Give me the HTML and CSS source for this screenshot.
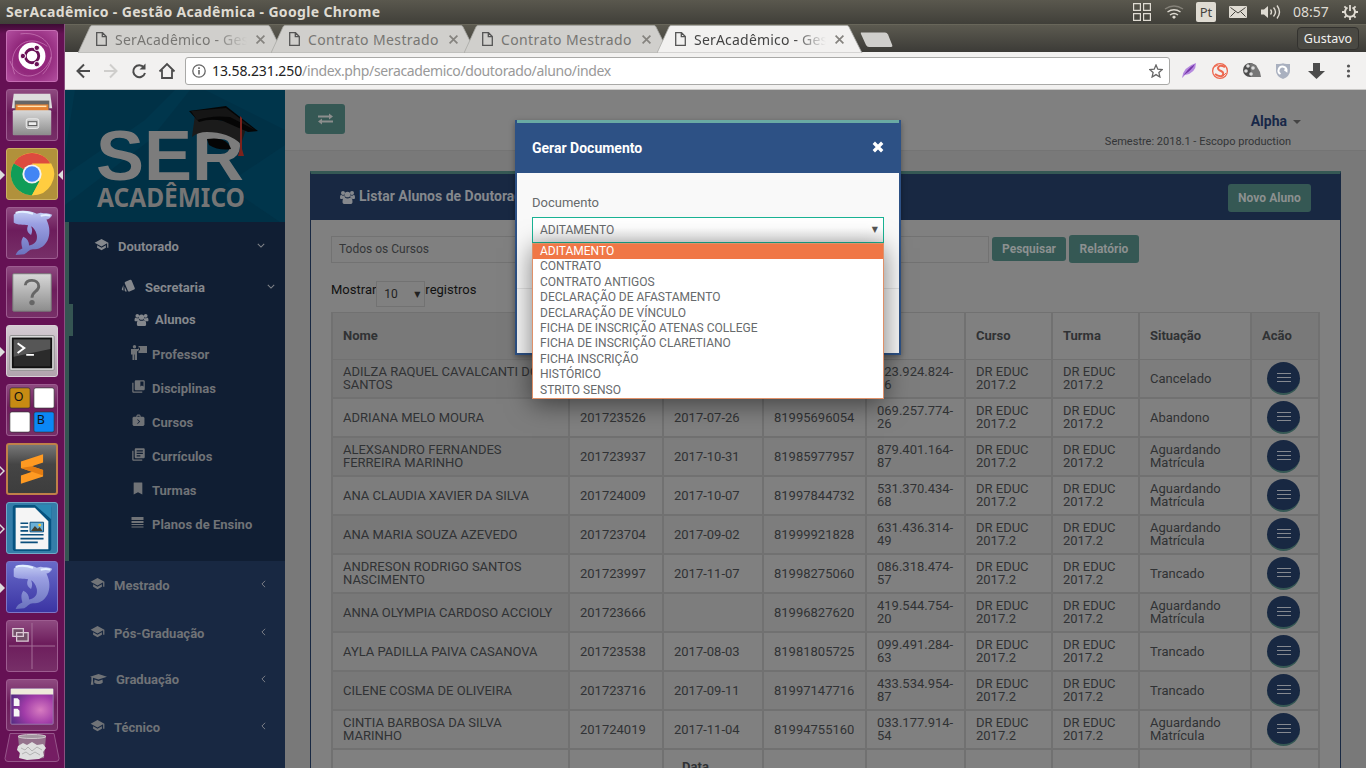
FILE: index.html
```html
<!DOCTYPE html>
<html lang="pt">
<head>
<meta charset="utf-8">
<title>SerAcadêmico - Gestão Acadêmica</title>
<link rel="stylesheet" href="styles.css">
</head>
<body>
<svg class="defs" width="0" height="0">
  <defs>
    <linearGradient id="steel" x1="0" y1="0" x2="0" y2="1"><stop offset="0" stop-color="#d8d8d8"/><stop offset="1" stop-color="#8c8c8c"/></linearGradient>
    <linearGradient id="dol" x1="0" y1="0" x2="0" y2="1"><stop offset="0" stop-color="#c3cdf3"/><stop offset=".3" stop-color="#9a9fe2"/><stop offset="1" stop-color="#6a72bd"/></linearGradient>
    <radialGradient id="desk" cx=".7" cy=".6" r=".8"><stop offset="0" stop-color="#d77bc0"/><stop offset=".5" stop-color="#a13ca8"/><stop offset="1" stop-color="#502a80"/></radialGradient>
  </defs>
  <symbol id="school" viewBox="0 0 24 24"><path d="M12 3L1 9l11 6 9-4.91V17h2V9L12 3zM5 13.18v4L12 21l7-3.82v-4L12 17l-7-3.82z"/></symbol>
  <symbol id="style" viewBox="0 0 24 24"><path d="M2.53 19.65l1.34.56v-9.03l-2.43 5.86c-.41 1.02.08 2.19 1.09 2.61zm19.5-3.7L17.07 3.98a2.013 2.013 0 0 0-1.81-1.23c-.26 0-.53.04-.79.15L7.1 5.95a1.999 1.999 0 0 0-1.08 2.6l4.96 11.97a1.998 1.998 0 0 0 2.6 1.08l7.36-3.05a1.994 1.994 0 0 0 1.09-2.6zM5.88 19.75c0 1.1.9 2 2 2h1.45l-3.45-8.34v6.34z"/></symbol>
  <symbol id="users" viewBox="0 0 30 28"><circle cx="6" cy="6" r="4"/><circle cx="24" cy="6" r="4"/><circle cx="15" cy="9" r="5.7"/><path d="M0 16c0-5 1-6 3-6 2 2 4 2 6 0 0 3 1 5 2 6-3 0-5 0-6 2H3c-2 0-3-1-3-2zM30 16c0-5-1-6-3-6-2 2-4 2-6 0 0 3-1 5-2 6 3 0 5 0 6 2h2c2 0 3-1 3-2zM5 24c0-5 1-9 5-9 3 2.500 7 2.500 10 0 4 0 5 4 5 9 0 3-2 4-4 4H9c-2 0-4-1-4-4z"/></symbol>
  <symbol id="teacher" viewBox="0 0 16 15"><circle cx="3.500" cy="1.700" r="1.700"/><path d="M0 4h7l1-1v2L6 6.500V15H4V9.500H3.400V15H1.500V9.500H0zM7.500 1H16v7H7.500V6L9 5V2.500H7.500z"/></symbol>
  <symbol id="shelf" viewBox="0 0 24 24"><path d="M4 6H2v14c0 1.100.9 2 2 2h14v-2H4V6zm16-4H8c-1.100 0-2 .9-2 2v12c0 1.100.9 2 2 2h12c1.100 0 2-.9 2-2V4c0-1.100-.9-2-2-2zm0 10l-2.500-1.500L15 12V4h5v8z"/></symbol>
  <symbol id="case" viewBox="0 0 24 24"><path fill-rule="evenodd" d="M8 5V3l2-2h4l2 2v2h5l2 2v13l-2 2H3l-2-2V7l2-2zm2 0h4V3h-4zm0 4v2l3 3-3 3v2l5-5z"/></symbol>
  <symbol id="books" viewBox="0 0 24 24"><path d="M4 6H2v14c0 1.100.9 2 2 2h14v-2H4V6zm16-4H8c-1.100 0-2 .9-2 2v12c0 1.100.9 2 2 2h12c1.100 0 2-.9 2-2V4c0-1.100-.9-2-2-2zm-1 9H9V9h10v2zm-4 4H9v-2h6v2zm4-8H9V5h10v2z"/></symbol>
  <symbol id="mark" viewBox="0 0 24 24"><path d="M19 1H5c-1 0-1 1-1 2v20l8-4 8 4V3c0-1 0-2-1-2z"/></symbol>
  <symbol id="lines" viewBox="0 0 12 11"><path d="M0 0h12v3H0zM0 4h12v2H0zM0 7h12v1H0zM0 9.500h12v1H0z"/></symbol>
  <symbol id="cap" viewBox="0 0 17 12"><path d="M8.500 0L17 2.700 8.500 5.500 3 3.700v3l.5 4H.8l.6-4V3.200L0 2.700zM4.500 5.500l4 1.400 4-1.400.3 3c-2 2-6.600 2-8.600 0z"/></symbol>
  <symbol id="down" viewBox="0 0 10 6"><path d="M1 1l4 4 4-4" fill="none" stroke="currentColor" stroke-width="1.300"/></symbol>
  <symbol id="left" viewBox="0 0 6 10"><path d="M5 1L1 5l4 4" fill="none" stroke="currentColor" stroke-width="1.200"/></symbol>
  <symbol id="tab" viewBox="0 0 206 28"><path d="M0 28L12 2Q12.500 .5 14 .5H190Q191.500 .5 192 2L205 28z" stroke="#aaa9a6" stroke-width=".8"/></symbol>
  <symbol id="page" viewBox="0 0 11 14"><path d="M.7.700h5.800l3.800 3.800v8.800H.7zM6.300.700v4h4" fill="none" stroke="#555" stroke-width="1.300"/></symbol>
  <symbol id="x" viewBox="0 0 8 8"><path d="M.5.500l7 7M7.500.500l-7 7" stroke="currentColor" stroke-width="1.500"/></symbol>
  <symbol id="dolphin" viewBox="0 0 52 52"><path d="M7 7C12 1 23 2 31 6l4-1c4 1 8 0 12 2-1 3-4 5-6 5 4 8 4 16 1 22-4 7-9 9-15 9-4 0-6 4-9 5l-9 1c1-4 4-6 7-7-1-4-2-8 1-12 4 2 6 5 6 9 6-1 9-5 8-11-1-5-4-8-6-9 2 4 1 7 0 9-4-2-5-6-3-10-5-1-11 0-15-3z" fill="url(#dol)"/><path d="M9 5c6-2 12-1 18 1M35 8c4-1 7-1 10 0" stroke="#e2efff" stroke-width="2" fill="none"/></symbol>
</svg>

<header class="topbar">
  <span class="wtitle">SerAcadêmico - Gestão Acadêmica - Google Chrome</span>
  <div class="tray">
    <svg width="18" height="18" viewBox="0 0 18 18" fill="none" stroke="#dfdbd2" stroke-width="1.200"><path d="M.6.600h6.800v6.800H.6zM10.600.600h6.800v6.800h-6.800zM.6 10.600h6.800v6.800H.6zM10.600 10.600h6.800v6.800h-6.800z"/></svg>
    <svg class="wifi" width="20" height="14" viewBox="0 0 20 14" fill="none" stroke="#dfdbd2" stroke-width="1.500"><path d="M1 4q9-6 18 0" stroke="#858279"/><path d="M3.500 7q6.500-4.500 13 0M6 10q4-3 8 0"/><path d="M8 12l2-1.500 2 1.500-2 2z" fill="#dfdbd2" stroke="none"/></svg>
    <span class="lang">Pt</span>
    <svg class="mail" width="18" height="12" viewBox="0 0 18 12"><rect width="18" height="12" rx="1" fill="#dfdbd2"/><path d="M1.500 1.500L9 7l7.500-5.500M1.500 10.500l5-5M16.500 10.500l-5-5" stroke="#45433d" fill="none"/></svg>
    <svg class="vol" width="20" height="14" viewBox="0 0 20 14"><path d="M0 4.500h3L7 1v12L3 9.500H0z" fill="#dfdbd2"/><path d="M9.500 4.500q2 2.500 0 5M12.500 2.500q4 4.500 0 9M16 .5q5 6.500 0 13" stroke="#dfdbd2" fill="none" stroke-width="1.400"/></svg>
    <span class="clock">08:57</span>
    <svg class="gear" width="16" height="16" viewBox="0 0 16 16" fill="none" stroke="#dfdbd2"><path d="M5.500 3.500a5 5 0 1 0 5 0" stroke-width="2"/><path d="M8 1v6M8 13v3M0 8h3M13 8h3M2.400 2.400l2 2M13.600 2.400l-2 2M2.400 13.600l2-2M13.600 13.600l-2-2" stroke-width="1.800"/></svg>
  </div>
</header>

<div class="desktop">
<nav class="launcher">
  <div class="tile ubuntu"><svg viewBox="0 0 52 52"><path d="M8 45C-2 20 20 0 42 16M14 3c28-4 43 22 23 42M3 31c8 24 36 19 43-4" fill="none" stroke="#d58bc4" opacity=".6"/><circle cx="26" cy="26" r="14" fill="#fff"/><circle cx="26" cy="26" r="7" fill="none" stroke="#6a1156" stroke-width="3"/><g fill="#6a1156" stroke="#fff"><circle cx="16.500" cy="26" r="2.800"/><circle cx="31" cy="17.500" r="2.800"/><circle cx="31" cy="34.500" r="2.800"/></g></svg></div>
  <div class="tile"><svg viewBox="0 0 52 52"><path d="M7 4h38l2 15H5z" fill="#ddd"/><rect x="8" y="11" width="36" height="12" fill="#666"/><rect x="9" y="15" width="34" height="8" fill="#e48232"/><path d="M11 17h30" stroke="#ffe3b4" stroke-width="1.500"/><rect x="6" y="21" width="40" height="26" rx="1" fill="url(#steel)"/><rect x="20" y="30" width="13" height="10" rx="2" fill="#c9c9c9" stroke="#eee"/><rect x="22" y="33" width="9" height="4" fill="#eee" stroke="#555"/></svg></div>
  <div class="tile gold run focus"><svg viewBox="0 0 52 52"><circle cx="26" cy="26" r="22" fill="#ffcd40"/><path d="M26 26L7 15a22 22 0 0 1 38 0z" fill="#dd4b3e"/><path d="M7 15A22 22 0 0 0 26 48l8-14-8-8z" fill="#109d58"/><path d="M26 15h20a22 22 0 0 1-20 33l9-17z" fill="#ffcd40"/><circle cx="26" cy="26" r="10" fill="#f2f2f2"/><circle cx="26" cy="26" r="8" fill="#4285f4"/></svg></div>
  <div class="tile"><svg viewBox="0 0 52 52"><use href="#dolphin"/></svg></div>
  <div class="tile"><svg viewBox="0 0 52 52"><rect x="6" y="7" width="40" height="39" rx="1" fill="url(#steel)" stroke="#777"/><path d="M19 19c0-7 14-7 14 1 0 6-7 5-7 12" fill="none" stroke="#666" stroke-width="3"/><circle cx="26" cy="37" r="2.800" fill="#666"/></svg></div>
  <div class="tile silver run"><svg viewBox="0 0 52 52"><rect x="3" y="10" width="46" height="36" rx="1" fill="#e5e5e5" stroke="#888"/><rect x="6" y="13" width="40" height="30" fill="#2b2b2b" stroke="#111" stroke-width="2"/><path d="M7 14h38v10L7 32z" fill="#565656"/><path d="M11 18l7 5-7 5M20 30h8" fill="none" stroke="#fff" stroke-width="2"/></svg></div>
  <div class="tile"><svg viewBox="0 0 52 52"><g stroke="#333" stroke-width=".7"><rect x="3" y="3" width="21" height="21" rx="2" fill="#c78b13"/><rect x="28" y="3" width="21" height="21" rx="2" fill="#fff"/><rect x="3" y="28" width="21" height="21" rx="2" fill="#fff"/><rect x="28" y="28" width="21" height="21" rx="2" fill="#0b87f5"/></g><text x="7" y="17" class="boxlet">O</text><text x="31" y="41" class="boxlet">B</text></svg></div>
  <div class="tile subl win"><svg viewBox="0 0 52 52"><path d="M14 18l24-8v9l-12 4 12 4v7l-24 8v-9l12-4-12-4z" fill="#ff9a22"/><path d="M14 25l12-2 12 4v6z" fill="#e37c12"/></svg></div>
  <div class="tile writer win"><svg viewBox="0 0 52 52"><rect x="6" y="2" width="40" height="48" rx="3" fill="#065380"/><path d="M9 5h20l14 14v29H9z" fill="#f5f5f5"/><path d="M29 2h17v15z" fill="#2b88b4"/><path d="M14 21h8M14 25h8M14 29h8M14 33h24M14 37h24M14 41h18" stroke="#0b4f7c" stroke-width="1.700"/><path d="M24 20h14v10H24z" fill="#6ab0d6" stroke="#0b4f7c"/><path d="M25 29l4-5 3 3 2-2 3 4z" fill="#46412e"/><circle cx="34" cy="23" r="1.500" fill="#ffc62b"/></svg></div>
  <div class="tile blue run"><svg viewBox="0 0 52 52"><use href="#dolphin"/></svg></div>
  <div class="tile"><svg viewBox="0 0 52 52"><path d="M26 2v48M2 26h48" stroke="#a57199"/><path d="M6 8h11v8H6zM10 12h12v9H10z" fill="#725068" stroke="#dcc9d6" stroke-width="1.300"/></svg></div>
  <div class="tile"><svg viewBox="0 0 52 52"><rect x="4" y="9" width="44" height="37" rx="1" fill="url(#desk)" stroke="#9877aa"/><path d="M4 9h44v6H4z" fill="#eeebdb"/><path d="M7 19h4l2 2v6H7zM7 30h4l2 2v6H7z" fill="#f6f6f6"/></svg></div>
  <div class="trash"><svg width="56" height="30" viewBox="0 0 56 30"><path d="M6 .5h44l5 25q0 3-3 3H4q-3 0-3-3z" fill="#751d63" stroke="#96568a"/><path d="M14 3h28l-2 22q-12 2-24 0z" fill="#9c8896" opacity=".8"/><path d="M14 13l5-3 4 2 5-3 5 3 6-1 3 4-3 4 1 4-5 3-12 1-8-2 1-5-3-3z" fill="#dedede"/><path d="M17 15l4 2 3-3 4 4 5-4 5 3M18 21l4-2 4 3 5-3 5 3" fill="none" stroke="#b3b3b3"/><ellipse cx="28" cy="3.500" rx="14" ry="2" fill="#a395a0" stroke="#cfc6cc"/></svg></div>
</nav>

<div class="browser">
  <div class="tabs">
    <div class="tab"><svg class="shape" width="206" height="28"><use href="#tab"/></svg><svg class="pg" width="11" height="14"><use href="#page"/></svg><span class="tt">SerAcadêmico - Ges</span><svg class="tx" width="9" height="9"><use href="#x"/></svg></div>
    <div class="tab full"><svg class="shape" width="206" height="28"><use href="#tab"/></svg><svg class="pg" width="11" height="14"><use href="#page"/></svg><span class="tt">Contrato Mestrado</span><svg class="tx" width="9" height="9"><use href="#x"/></svg></div>
    <div class="tab full"><svg class="shape" width="206" height="28"><use href="#tab"/></svg><svg class="pg" width="11" height="14"><use href="#page"/></svg><span class="tt">Contrato Mestrado</span><svg class="tx" width="9" height="9"><use href="#x"/></svg></div>
    <div class="tab active"><svg class="shape" width="206" height="28"><use href="#tab"/></svg><svg class="pg" width="11" height="14"><use href="#page"/></svg><span class="tt">SerAcadêmico - Ges</span><svg class="tx" width="9" height="9"><use href="#x"/></svg></div>
    <svg class="newtab" width="33" height="16" viewBox="0 0 33 16"><path d="M1 .500h24q2 0 3 2l4 10q1 2.500-1 2.500H9q-2 0-3-2L1 2Q.5.500 1 .5z" fill="#cfcecb"/></svg>
    <span class="user">Gustavo</span>
  </div>
  <div class="toolbar">
    <svg class="nav" width="100" height="18" viewBox="0 0 100 18" fill="none" stroke="#4b4b4b" stroke-width="2"><path d="M14 9H1.500M8 2.500L1.500 9 8 15.500"/><path d="M28 9h12.500M34 2.500L40.500 9 34 15.500" stroke="#cfcecc"/><path d="M68 5.500A6 6 0 1 0 69 11"/><path d="M69.500 1.500v6h-6z" fill="#4b4b4b" stroke="none"/><path d="M83.500 9.500L91 2l7.500 7.500M86 8v8h10V8" stroke-width="1.800"/></svg>
    <div class="url">
      <svg width="14" height="14" viewBox="0 0 14 14"><circle cx="7" cy="7" r="6.200" fill="none" stroke="#666" stroke-width="1.300"/><path d="M7 6v4.500M7 3.300v1.600" stroke="#666" stroke-width="1.600"/></svg>
      <span class="addr"><b>13.58.231.250</b>/index.php/seracademico/doutorado/aluno/index</span>
      <svg class="star" width="14" height="14" viewBox="0 0 14 14"><path d="M7 1l1.800 4.200 4.500.4-3.400 3 1 4.400L7 10.600 3.100 13l1-4.400-3.400-3 4.500-.4z" fill="none" stroke="#666" stroke-width="1.300"/></svg>
    </div>
    <svg class="ext" width="178" height="18" viewBox="0 0 178 18"><path d="M0 16Q1 5 14 1 14 11 3 13z" fill="#b68adf"/><path d="M0 16Q5 7 13 2 10 8 2 13z" fill="#7535a8"/><g fill="none" stroke="#ed684f"><circle cx="38" cy="9" r="7.400" stroke-width="1.300"/><path d="M43 5q-6-3-7 1 0 2 3 3 4 2 1 5-3 1-7-2" stroke-width="2"/><path d="M32 5l4-2M41 14l3-3"/></g><g><circle cx="68" cy="8" r="7" fill="#4d4d4d"/><path d="M69 15h10l-1-5-4-7-6-2z" fill="#777"/><g fill="#ddd"><circle cx="66" cy="4" r="1.800"/><circle cx="71" cy="6" r="1.800"/><circle cx="64" cy="9" r="1.800"/><circle cx="69" cy="12" r="1.800"/></g></g><path d="M94 2q7 0 7-1 0 1 7 1v7q0 5-7 8-7-3-7-8z" fill="#a9b0bf"/><path d="M98.500 12a4 4 0 1 1 6-3l-2-1.500" fill="none" stroke="#fff" stroke-width="2"/><path d="M131 1h7v8h5l-8.500 8L126 9h5z" fill="#4c4c4c"/><g fill="#555"><circle cx="166.500" cy="4" r="1.600"/><circle cx="166.500" cy="9" r="1.600"/><circle cx="166.500" cy="14" r="1.600"/></g></svg>
  </div>

  <div class="page">
    <aside class="side">
      <div class="logo"><svg width="220" height="132" viewBox="0 0 220 132"><path d="M0 0h10L0 65zM125 0L85 50 0 115V85L80 30 110 0z" fill="#00364c"/><path d="M220 55l-60 40 55 37h5zM140 0l80 40V0z" fill="#00354b"/><text class="ser" x="31" y="90" textLength="148" lengthAdjust="spacingAndGlyphs">SER</text><text class="aca" x="32" y="117" textLength="148" lengthAdjust="spacingAndGlyphs">ACADÊMICO</text><path d="M130 25L127 47Q133 42 142 42q21 0 34 12l6-18z" fill="#1b1b1b"/><path d="M142 49q20-3 24 10-12 2-22-4z" fill="#050505"/><path d="M124 21l37-5 32 25-10 1-25-11q-12-3-24 1z" fill="#050505"/><path d="M126 21l35-3 29 22-25-13q-18-2-33 3z" fill="#151515"/><path d="M175 26v33l-2 7h6l-2-7V28z" fill="#7c221c"/></svg></div>
      <div class="open">
        <div class="it l1"><svg class="ic" width="15" height="15"><use href="#school"/></svg><span>Doutorado</span><svg class="chev" width="8" height="5"><use href="#down"/></svg></div>
        <div class="it l2"><svg class="ic" width="15" height="15"><use href="#style"/></svg><span>Secretaria</span><svg class="chev" width="8" height="5"><use href="#down"/></svg></div>
        <div class="it l3 cur"><svg class="ic" width="15" height="13"><use href="#users"/></svg><span>Alunos</span></div>
        <div class="it l3"><svg class="ic" width="16" height="15"><use href="#teacher"/></svg><span>Professor</span></div>
        <div class="it l3"><svg class="ic" width="15" height="15"><use href="#shelf"/></svg><span>Disciplinas</span></div>
        <div class="it l3"><svg class="ic" width="15" height="13"><use href="#case"/></svg><span>Cursos</span></div>
        <div class="it l3"><svg class="ic" width="15" height="15"><use href="#books"/></svg><span>Currículos</span></div>
        <div class="it l3"><svg class="ic" width="14" height="13"><use href="#mark"/></svg><span>Turmas</span></div>
        <div class="it l3"><svg class="ic" width="13" height="11"><use href="#lines"/></svg><span>Planos de Ensino</span></div>
      </div>
      <div class="it l0"><svg class="ic" width="15" height="15"><use href="#school"/></svg><span>Mestrado</span><svg class="chev" width="5" height="8"><use href="#left"/></svg></div>
      <div class="it l0"><svg class="ic" width="15" height="15"><use href="#school"/></svg><span>Pós-Graduação</span><svg class="chev" width="5" height="8"><use href="#left"/></svg></div>
      <div class="it l0 fa"><svg class="ic" width="17" height="12"><use href="#cap"/></svg><span>Graduação</span><svg class="chev" width="5" height="8"><use href="#left"/></svg></div>
      <div class="it l0"><svg class="ic" width="15" height="15"><use href="#school"/></svg><span>Técnico</span><svg class="chev" width="5" height="8"><use href="#left"/></svg></div>
      <div class="it l0"><svg class="ic" width="15" height="15"><use href="#school"/></svg></div>
    </aside>

    <main class="main">
      <div class="navbar">
        <div class="toggle"><svg width="15" height="12" viewBox="0 0 15 12"><path d="M0 2.500h11V.5L15 3.500l-4 3v-2H0zM15 7.500H4v-2L0 8.500l4 3v-2h11z" fill="#8c8e8d"/></svg></div>
        <div class="who"><div class="alpha">Alpha<i></i></div><div class="sem">Semestre: 2018.1 - Escopo production</div></div>
      </div>
      <section class="panel">
        <div class="phead"><svg width="15" height="14"><use href="#users"/></svg><span>Listar Alunos de Doutorado</span><a class="btn novo">Novo Aluno</a></div>
        <div class="pbody">
          <div class="filters"><div class="inp first">Todos os Cursos</div><div class="inp second"></div><a class="btn pesq">Pesquisar</a><a class="btn rel">Relatório</a></div>
          <div class="length"><span>Mostrar</span><div class="num">10<i>▼</i></div><span>registros</span></div>
          <table class="grid">
            <colgroup><col class="c1"><col class="c2"><col class="c3"><col class="c4"><col class="c5"><col class="c6"><col class="c7"><col class="c8"><col class="c9"></colgroup>
            <thead><tr><th>Nome</th><th></th><th></th><th></th><th></th><th>Curso</th><th>Turma</th><th>Situação</th><th class="last">Acão</th></tr></thead>
            <tbody>
            <tr><td>ADILZA RAQUEL CAVALCANTI DOS SANTOS</td><td></td><td></td><td></td><td>023.924.824-16</td><td>DR EDUC 2017.2</td><td>DR EDUC 2017.2</td><td>Cancelado</td><td><b class="act"><i></i></b></td></tr>
            <tr><td>ADRIANA MELO MOURA</td><td>201723526</td><td>2017-07-26</td><td>81995696054</td><td>069.257.774-26</td><td>DR EDUC 2017.2</td><td>DR EDUC 2017.2</td><td>Abandono</td><td><b class="act"><i></i></b></td></tr>
            <tr><td>ALEXSANDRO FERNANDES FERREIRA MARINHO</td><td>201723937</td><td>2017-10-31</td><td>81985977957</td><td>879.401.164-87</td><td>DR EDUC 2017.2</td><td>DR EDUC 2017.2</td><td>Aguardando Matrícula</td><td><b class="act"><i></i></b></td></tr>
            <tr><td>ANA CLAUDIA XAVIER DA SILVA</td><td>201724009</td><td>2017-10-07</td><td>81997844732</td><td>531.370.434-68</td><td>DR EDUC 2017.2</td><td>DR EDUC 2017.2</td><td>Aguardando Matrícula</td><td><b class="act"><i></i></b></td></tr>
            <tr><td>ANA MARIA SOUZA AZEVEDO</td><td>201723704</td><td>2017-09-02</td><td>81999921828</td><td>631.436.314-49</td><td>DR EDUC 2017.2</td><td>DR EDUC 2017.2</td><td>Aguardando Matrícula</td><td><b class="act"><i></i></b></td></tr>
            <tr><td>ANDRESON RODRIGO SANTOS NASCIMENTO</td><td>201723997</td><td>2017-11-07</td><td>81998275060</td><td>086.318.474-57</td><td>DR EDUC 2017.2</td><td>DR EDUC 2017.2</td><td>Trancado</td><td><b class="act"><i></i></b></td></tr>
            <tr><td>ANNA OLYMPIA CARDOSO ACCIOLY</td><td>201723666</td><td></td><td>81996827620</td><td>419.544.754-20</td><td>DR EDUC 2017.2</td><td>DR EDUC 2017.2</td><td>Aguardando Matrícula</td><td><b class="act"><i></i></b></td></tr>
            <tr><td>AYLA PADILLA PAIVA CASANOVA</td><td>201723538</td><td>2017-08-03</td><td>81981805725</td><td>099.491.284-63</td><td>DR EDUC 2017.2</td><td>DR EDUC 2017.2</td><td>Trancado</td><td><b class="act"><i></i></b></td></tr>
            <tr><td>CILENE COSMA DE OLIVEIRA</td><td>201723716</td><td>2017-09-11</td><td>81997147716</td><td>433.534.954-87</td><td>DR EDUC 2017.2</td><td>DR EDUC 2017.2</td><td>Trancado</td><td><b class="act"><i></i></b></td></tr>
            <tr><td>CINTIA BARBOSA DA SILVA MARINHO</td><td>201724019</td><td>2017-11-04</td><td>81994755160</td><td>033.177.914-54</td><td>DR EDUC 2017.2</td><td>DR EDUC 2017.2</td><td>Aguardando Matrícula</td><td><b class="act"><i></i></b></td></tr>
            </tbody>
            <tfoot><tr><th>Nome</th><th>Matrícula</th><th class="dt">Data<br>Matrícula</th><th>Celular</th><th>CPF</th><th>Curso</th><th>Turma</th><th>Situação</th><th>Acão</th></tr></tfoot>
          </table>
        </div>
      </section>
    </main>

    <div class="modal">
      <div class="mhead"><span>Gerar Documento</span><svg width="12" height="12" viewBox="0 0 10 10"><path d="M1.500 1.500l7 7M8.500 1.500l-7 7" stroke="#fff" stroke-width="2.800"/></svg></div>
      <div class="mbody">
        <label>Documento</label>
        <div class="select"><span>ADITAMENTO</span><i>▼</i>
          <ul class="options"><li class="sel">ADITAMENTO</li><li>CONTRATO</li><li>CONTRATO ANTIGOS</li><li>DECLARAÇÃO DE AFASTAMENTO</li><li>DECLARAÇÃO DE VÍNCULO</li><li>FICHA DE INSCRIÇÃO ATENAS COLLEGE</li><li>FICHA DE INSCRIÇÃO CLARETIANO</li><li>FICHA INSCRIÇÃO</li><li>HISTÓRICO</li><li>STRITO SENSO</li></ul>
        </div>
      </div>
      <div class="mfoot"></div>
    </div>
  </div>
</div>
</div>
</body>
</html>
```
FILE: styles.css
```css
* { box-sizing: border-box; }
body { margin: 0; width: 1366px; height: 768px; overflow: hidden; font-family: Roboto, sans-serif; font-size: 13px; }
svg { display: block; flex: none; }
.defs { position: absolute; }

.topbar { height: 24px; display: flex; justify-content: space-between; padding: 0 8px 0 6px; background: linear-gradient(#5a584e, #403f39); color: #dfdbd2; font-family: "Noto Sans", sans-serif; line-height: 24px; }
.wtitle { font-weight: 700; font-size: 14px; letter-spacing: 0.35px; white-space: nowrap; }
.tray { display: flex; align-items: center; }
.wifi { margin-left: 13px; }
.lang { margin-left: 12px; width: 20px; height: 20px; border-radius: 2px; background: #dfdbd2; color: #45433d; text-align: center; line-height: 20px; font-size: 13px; }
.mail { margin-left: 13px; }
.vol { margin-left: 14px; }
.clock { margin-left: 12px; width: 37px; font-size: 14px; white-space: nowrap; }
.gear { margin-left: 12px; }

.desktop { display: flex; height: 744px; }
.launcher { width: 65px; flex: none; padding: 6px 0 0 6px; display: flex; flex-direction: column; gap: 7px; background: linear-gradient(#3d0b34, #651154 10px, #651154); border-right: 1px solid #8a5080; }
.tile { width: 52px; height: 52px; flex: none; border-radius: 3px; border: 1px solid #9d5c90; background: linear-gradient(#8e4a80, #6d1d5c 45%, #772f68); position: relative; }
.tile svg { width: 50px; height: 50px; }
.ubuntu { background: radial-gradient(circle, #9f1d84, #92297c 50%, #b24f9f); border-color: #c66eb4; }
.gold { background: #b1913b; border-color: #cbb063; }
.silver { background: linear-gradient(#d4cbd2, #b1a3ad); border-color: #d9d0d7; }
.subl { background: linear-gradient(#777, #454545 40%, #3d3d3d); border: 2px solid #c08049; }
.subl svg { width: 48px; height: 48px; }
.writer { background: #347da9; border-color: #71a8c8; }
.blue { background: linear-gradient(#686bc9, #3b34a3); border-color: #7d76c7; }
.run::before, .win::before { content: ""; position: absolute; left: -7px; top: 21px; border: 5px solid transparent; border-left-color: #ddd; border-right-width: 0; }
.subl::before { left: -8px; }
.win::after { content: ""; position: absolute; left: -7px; top: 23px; border: 3px solid transparent; border-left-color: #651154; border-right-width: 0; }
.subl::after { left: -8px; }
.focus::after { content: ""; position: absolute; right: -6px; top: 21px; border: 5px solid transparent; border-right-color: #ddd; border-left-width: 0; }
.boxlet { font: 13px "Noto Sans", sans-serif; fill: #111; }
.trash { margin: -5px 0 0 -2px; }

.browser { flex: 1; min-width: 0; display: flex; flex-direction: column; }
.tabs { height: 28px; display: flex; padding-left: 13px; background: linear-gradient(#5c5a50, #3c3b37); border-top: 1px solid #68665a; font-family: "Noto Sans", sans-serif; }
.tab { width: 206px; height: 28px; margin-right: -13px; flex: none; position: relative; display: flex; align-items: center; padding-left: 18px; color: #777673; }
.shape { position: absolute; left: 0; top: 0; fill: #d0cfcc; }
.active { color: #444; z-index: 1; }
.active .shape { fill: #f2f1f0; }
.pg { position: relative; z-index: 1; }
.tt { position: relative; margin-left: 8px; width: 132px; font-size: 14px; letter-spacing: 0.2px; white-space: nowrap; -webkit-mask-image: linear-gradient(90deg, #000 100px, transparent); mask-image: linear-gradient(90deg, #000 100px, transparent); }
.full .tt { -webkit-mask-image: none; mask-image: none; letter-spacing: 0.38px; }
.tx { position: relative; margin-left: 9px; color: #85837f; }
.newtab { margin: 7px 0 0 10px; }
.user { margin: 2px 7px 0 auto; width: 62px; height: 23px; border: 1px solid #33322f; border-radius: 4px; background: #4a4943; color: #f2f1f0; text-align: center; line-height: 21px; font-size: 12.5px; }
.toolbar { height: 38px; flex: none; display: flex; align-items: center; background: #f2f1f0; border-bottom: 1px solid #c9c8c6; padding-left: 11px; }
.nav { margin-top: 1px; }
.url { margin-left: 9px; width: 985px; height: 28px; border: 1px solid #a9a9a7; border-radius: 3px; background: #fff; display: flex; align-items: center; padding: 0 6px; }
.addr { margin-left: 6px; flex: 1; font: 14px "Noto Sans", sans-serif; color: #999; letter-spacing: -0.37px; white-space: nowrap; }
.addr b { font-weight: 400; color: #222; letter-spacing: -0.1px; }
.ext { margin-left: 12px; }

.page { flex: 1; display: flex; position: relative; overflow: hidden; background: #797979; }
.side { width: 220px; flex: none; background: #182842; color: #707377; font-weight: 700; }
.logo { height: 132px; background: #003146; }
.ser { font: 700 70px "Liberation Sans", sans-serif; fill: #7c7c7c; }
.aca { font: 700 27.5px "Noto Sans", sans-serif; fill: #757575; }
.open { height: 339px; background: #101e33; border-left: 4px solid #355552; }
.it { display: flex; align-items: center; padding-right: 20px; }
.it svg { fill: currentColor; }
.ic { position: relative; top: -2px; }
.it .chev { margin-left: auto; position: relative; top: -1px; color: #808389; }
.l1 { height: 48px; padding-left: 25px; color: #85888d; }
.l1 span { margin-left: 9px; }
.l2 { height: 34px; padding-left: 52px; padding-right: 10px; color: #85888d; }
.l2 span { margin-left: 9px; }
.l3 { height: 34px; padding-left: 62px; }
.l3 span { margin-left: auto; width: 113px; }
.cur { height: 32px; margin-bottom: 1px; padding-left: 61px; padding-bottom: 2px; color: #85888d; border-left: 4px solid #355552; }
.cur .ic { top: 0; }
.cur span { width: 110px; }
.l0 { height: 48px; padding-left: 25px; padding-right: 19px; }
.l0 span { margin-left: 9px; }
.fa { height: 46px; }
.fa .ic { top: 0; }
.fa span { position: relative; top: -1px; }

.main { flex: 1; min-width: 0; }
.navbar { height: 61px; display: flex; justify-content: space-between; background: #808080; border-bottom: 1px solid #747474; padding: 14px 65px 0 20px; }
.toggle { width: 40px; height: 30px; border-radius: 3px; background: #355854; display: flex; align-items: center; justify-content: center; }
.who { text-align: right; padding-top: 8px; }
.alpha { font-weight: 700; font-size: 14px; line-height: 18px; color: #182848; }
.alpha i { display: inline-block; margin-left: 6px; vertical-align: 2px; border: 4px solid transparent; border-top-color: #444; border-bottom: 0; }
.sem { font-size: 11px; line-height: 14px; margin: 5px 10px 0 0; color: #333537; }
.panel { margin: 20px 25px 0; height: 640px; border: 1px solid #182842; border-top: 3px solid #355854; background: #808080; }
.phead { height: 46px; display: flex; align-items: center; background: #182842; color: #85888d; padding: 0 29px 0 29px; font-weight: 700; font-size: 14px; }
.phead svg { fill: currentColor; }
.phead span { margin: -2px auto 0 4px; }
.btn { display: flex; align-items: center; justify-content: center; background: #355854; color: #8c9090; border-radius: 3px; font-weight: 700; font-size: 13px; }
.novo { width: 83px; height: 28px; margin-top: 2px; font-size: 12px; letter-spacing: 0.05px; }
.pbody { padding: 15px 20px 0; }
.filters { height: 28px; display: flex; align-items: center; }
.inp { height: 27px; border: 1px solid #727272; color: #343638; font-size: 12px; line-height: 25px; padding-left: 7px; }
.first { width: 300px; flex: none; }
.second { width: 355px; flex: none; margin-left: 3px; }
.pesq { width: 74px; height: 24px; margin-left: 3px; font-size: 12px; }
.rel { width: 70px; height: 28px; margin-left: 3px; font-size: 12px; }
.length { margin-top: 18px; height: 31px; display: flex; color: #111; line-height: 17px; }
.num { width: 49px; height: 26px; border: 1px solid #727272; color: #222; font-size: 12px; line-height: 25px; padding: 0 4px 0 7px; display: flex; justify-content: space-between; }
.num i { font: 8px/25px "DejaVu Sans", sans-serif; }
.grid { width: 989px; table-layout: fixed; border-collapse: separate; border-spacing: 0; border-left: 2px solid #717171; border-top: 1px solid #717171; color: #303234; line-height: 13px; }
.c1 { width: 237px; } .c2 { width: 94px; } .c3 { width: 100px; } .c4 { width: 103px; } .c5 { width: 99px; } .c6 { width: 87px; } .c7 { width: 87px; } .c8 { width: 112px; } .c9 { width: 68px; }
th { height: 47px; padding: 0 8px 1px 10px; text-align: left; border-right: 2px solid #717171; border-bottom: 1px solid #717171; }
.last, thead th:first-child { background: #797979; }
td { height: 39px; padding: 0 4px 1px 10px; border-right: 2px solid #717171; border-bottom: 2px solid #717171; vertical-align: middle; }
td:nth-child(1) { padding-right: 12px; }
tbody tr:nth-child(odd) td { background: #7d7d7d; }
tbody tr td:first-child { background: #7d7d7d; }
tbody tr:nth-child(odd) td:first-child { background: #787878; }
td:last-child { padding: 0; }
.act { display: flex; align-items: center; justify-content: center; margin: 0 auto; position: relative; left: -1.5px; width: 33px; height: 33px; border-radius: 50%; background: #182842; border-bottom: 2px solid #355854; }
.act i { width: 14px; height: 9px; border-top: 1px solid #858990; border-bottom: 1px solid #858990; background: linear-gradient(#858990, #858990) 0 3px / 14px 1px no-repeat; }
tfoot th { text-align: center; padding: 0; }
tfoot .dt { padding-right: 35px; }

.modal { position: absolute; left: 450px; top: 30px; width: 386px; height: 235px; border: 2px solid #2d5185; border-top: 0; background: #f9f9f9; box-shadow: 0 2px 6px rgba(0,0,0,.35); }
.mhead { height: 53px; display: flex; align-items: center; justify-content: space-between; padding: 0 15px; border-top: 3px solid #6aaaa3; background: #2d5185; color: #fff; font-weight: 700; font-size: 14px; }
.mhead svg { margin-top: -3px; }
.mbody { height: 116px; padding: 21px 15px 0; border-bottom: 1px solid #e3e3e3; color: #676a6c; }
label { display: block; line-height: 17px; }
.select { position: relative; margin-top: 6px; height: 26px; border: 1px solid #1ab394; background: linear-gradient(#fff 40%, #e9e9e9); display: flex; justify-content: space-between; padding: 0 5px 0 7px; font-size: 12px; line-height: 25px; }
.select i { font: 8px/24px "DejaVu Sans", sans-serif; color: #555; }
.options { position: absolute; left: -1px; top: 25px; width: 352px; height: 156px; margin: 0; padding: 0; list-style: none; background: #fff; border: 1px solid #df9069; box-shadow: 0 5px 24px rgba(0,0,0,.5); line-height: 15.400px; }
.options li { height: 15.400px; padding-left: 7px; }
.sel { background: #f07746; color: #fff; }
.mfoot { height: 64px; background: #f8f8f8; }
```
